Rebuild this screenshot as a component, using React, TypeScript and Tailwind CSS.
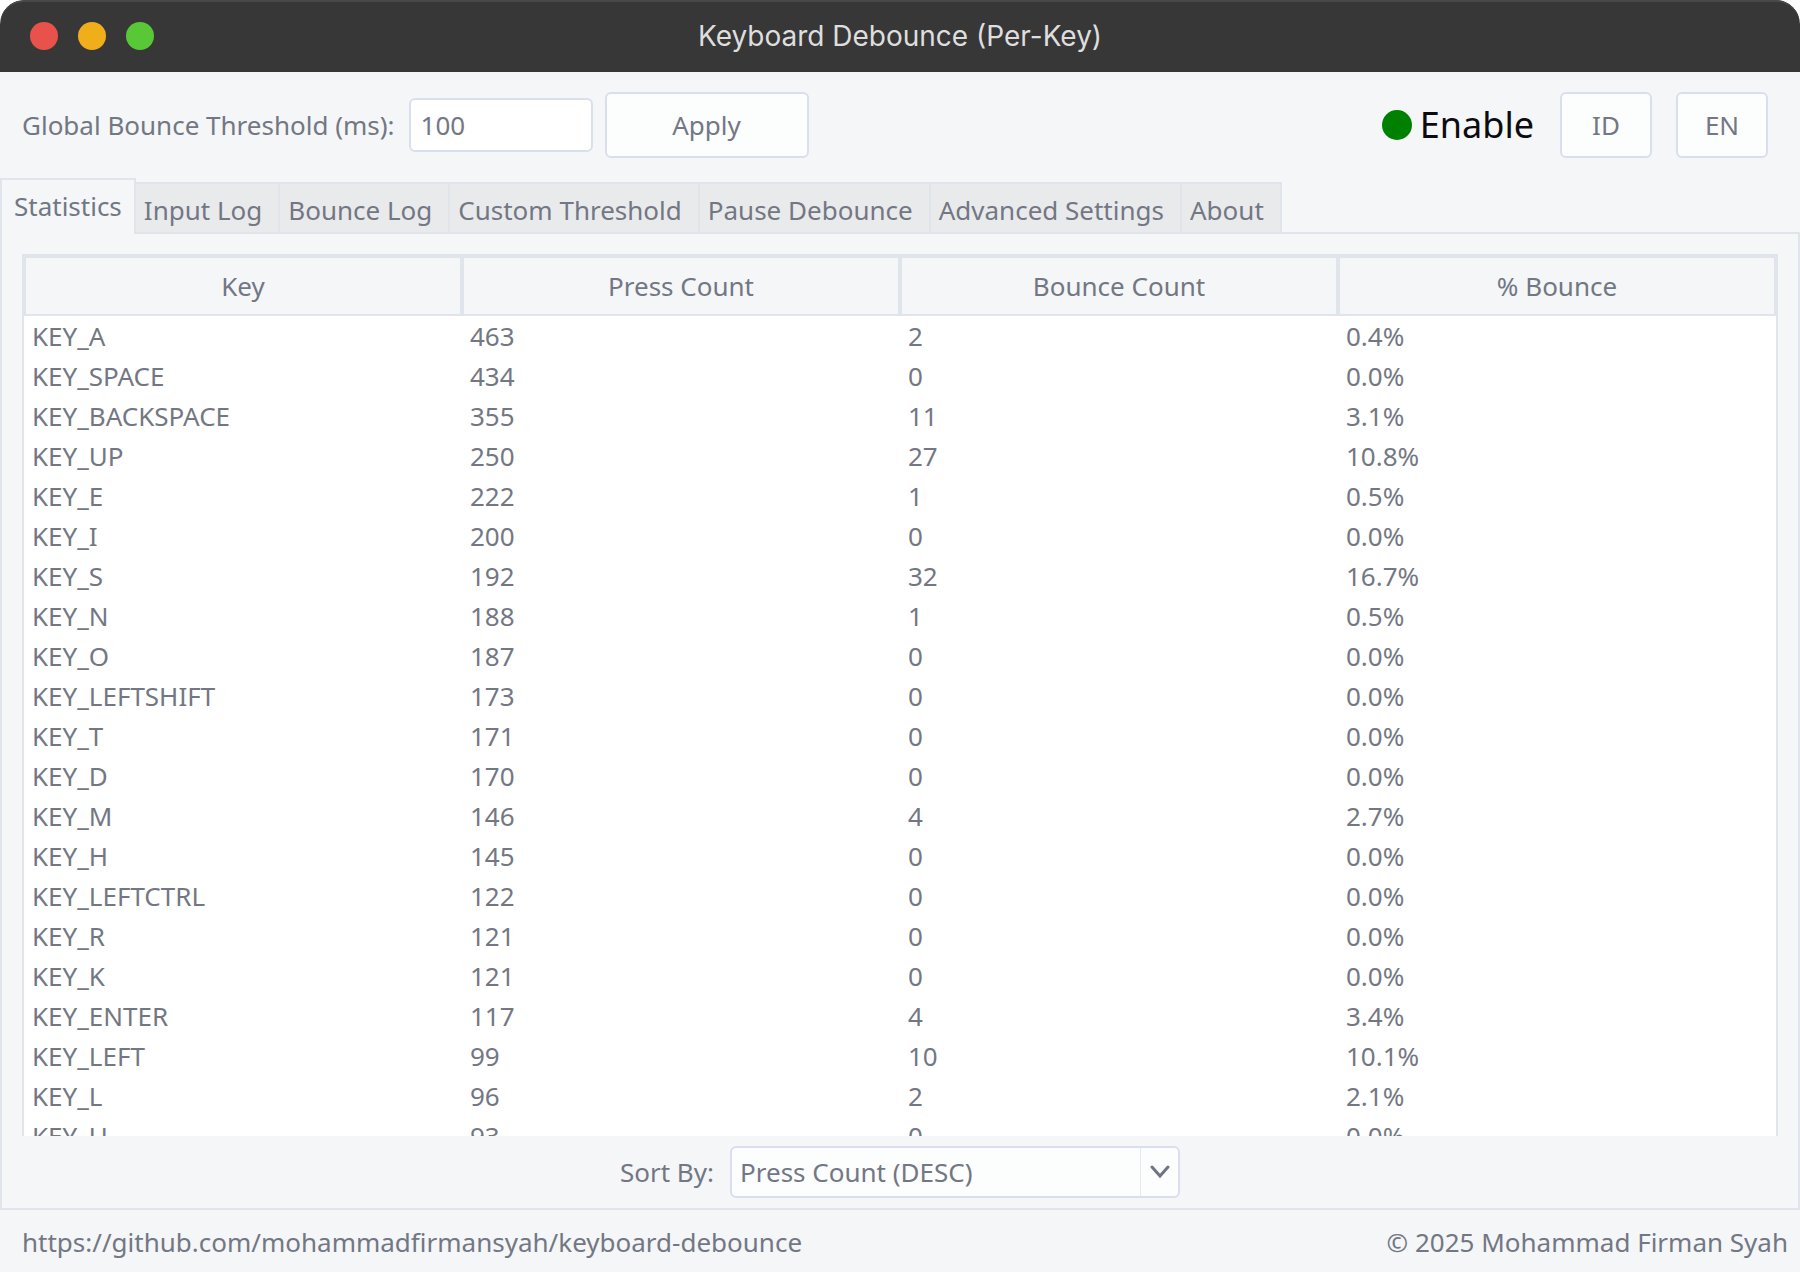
import { useState } from "react";

type KeyStat = { key: string; presses: number; bounces: number; rate: string };

const stats: KeyStat[] = [
  { key: "KEY_A", presses: 463, bounces: 2, rate: "0.4%" },
  { key: "KEY_SPACE", presses: 434, bounces: 0, rate: "0.0%" },
  { key: "KEY_BACKSPACE", presses: 355, bounces: 11, rate: "3.1%" },
  { key: "KEY_UP", presses: 250, bounces: 27, rate: "10.8%" },
  { key: "KEY_E", presses: 222, bounces: 1, rate: "0.5%" },
  { key: "KEY_I", presses: 200, bounces: 0, rate: "0.0%" },
  { key: "KEY_S", presses: 192, bounces: 32, rate: "16.7%" },
  { key: "KEY_N", presses: 188, bounces: 1, rate: "0.5%" },
  { key: "KEY_O", presses: 187, bounces: 0, rate: "0.0%" },
  { key: "KEY_LEFTSHIFT", presses: 173, bounces: 0, rate: "0.0%" },
  { key: "KEY_T", presses: 171, bounces: 0, rate: "0.0%" },
  { key: "KEY_D", presses: 170, bounces: 0, rate: "0.0%" },
  { key: "KEY_M", presses: 146, bounces: 4, rate: "2.7%" },
  { key: "KEY_H", presses: 145, bounces: 0, rate: "0.0%" },
  { key: "KEY_LEFTCTRL", presses: 122, bounces: 0, rate: "0.0%" },
  { key: "KEY_R", presses: 121, bounces: 0, rate: "0.0%" },
  { key: "KEY_K", presses: 121, bounces: 0, rate: "0.0%" },
  { key: "KEY_ENTER", presses: 117, bounces: 4, rate: "3.4%" },
  { key: "KEY_LEFT", presses: 99, bounces: 10, rate: "10.1%" },
  { key: "KEY_L", presses: 96, bounces: 2, rate: "2.1%" },
  { key: "KEY_U", presses: 93, bounces: 0, rate: "0.0%" },
];

const tabs = [
  "Statistics",
  "Input Log",
  "Bounce Log",
  "Custom Threshold",
  "Pause Debounce",
  "Advanced Settings",
  "About",
];

const columns = ["Key", "Press Count", "Bounce Count", "% Bounce"];

const buttonClass =
  "h-[66px] rounded-md border-2 border-[#d9dfed] bg-[#fcfdfd] text-center";

function TitleBar() {
  return (
    <header className="grid h-[72px] shrink-0 grid-cols-[1fr_auto_1fr] items-center rounded-t-[24px] bg-[#373737] px-[30px] inset-shadow-[0_2px_0_#484848]">
      <div className="flex gap-5">
        <button type="button" aria-label="Close" className="size-7 rounded-full bg-[#e9524a]" />
        <button type="button" aria-label="Minimize" className="size-7 rounded-full bg-[#f1ae1b]" />
        <button type="button" aria-label="Maximize" className="size-7 rounded-full bg-[#59c837]" />
      </div>
      <h1 className="font-['Inter',sans-serif] text-[28px] leading-9 text-[#dedede]">
        Keyboard Debounce (Per-Key)
      </h1>
    </header>
  );
}

function Toolbar() {
  return (
    <div className="flex shrink-0 items-center px-[22px] pt-5 pb-5 pr-8">
      <label htmlFor="threshold" className="mr-[14px]">
        Global Bounce Threshold (ms):
      </label>
      <input
        id="threshold"
        type="text"
        defaultValue="100"
        className="mr-3 h-[54px] w-[184px] rounded-md border-2 border-[#d9dfed] bg-white px-[10px]"
      />
      <button type="button" className={`${buttonClass} w-[204px]`}>
        Apply
      </button>
      <div className="mr-[26px] ml-auto flex items-center gap-2 text-4xl text-[#0c0c10]">
        <span className="size-[30px] rounded-full bg-[#008000]" />
        Enable
      </div>
      <button type="button" className={`${buttonClass} mr-6 w-[92px]`}>
        ID
      </button>
      <button type="button" className={`${buttonClass} w-[92px]`}>
        EN
      </button>
    </div>
  );
}

export default function App() {
  const [active, setActive] = useState("Statistics");

  return (
    <div className="h-screen bg-white">
      <div className="flex h-full flex-col overflow-hidden rounded-t-[24px] bg-[#f4f6f8] font-['Noto_Sans',sans-serif] text-[26px] leading-9 text-[#737783]">
        <TitleBar />
        <Toolbar />

        <div role="tablist" className="flex shrink-0 items-end">
          {tabs.map((tab) => (
            <button
              key={tab}
              type="button"
              role="tab"
              aria-selected={tab === active}
              onClick={() => setActive(tab)}
              className={
                tab === active
                  ? "h-14 border-x-2 border-t-2 border-[#dfe5eb] px-3 pb-[2px]"
                  : "h-[52px] border-y-2 border-r-2 border-[#dfe5eb] bg-[#e9eaec] pt-1 pr-4 pl-2"
              }
            >
              {tab}
            </button>
          ))}
          <div className="h-[52px] flex-1 border-b-2 border-[#dfe5eb]" />
        </div>

        <main className="flex min-h-0 flex-1 flex-col border-x-2 border-b-2 border-[#dfe5eb] px-5 pt-5">
          <div className="min-h-0 flex-1 overflow-hidden border-x-2 border-t-2 border-[#dfe5eb] bg-white">
            <table className="w-full table-fixed border-separate border-spacing-0">
              <thead>
                <tr>
                  {columns.map((column) => (
                    <th
                      key={column}
                      scope="col"
                      className="h-[60px] border-2 border-[#dfe5eb] bg-[#f4f6f8] p-0 font-normal"
                    >
                      {column}
                    </th>
                  ))}
                </tr>
              </thead>
              <tbody>
                {stats.map((row) => (
                  <tr key={row.key} className="h-10">
                    <td className="py-0 pl-2">{row.key}</td>
                    <td className="py-0 pl-2">{row.presses}</td>
                    <td className="py-0 pl-2">{row.bounces}</td>
                    <td className="py-0 pl-2">{row.rate}</td>
                  </tr>
                ))}
              </tbody>
            </table>
          </div>

          <div className="flex shrink-0 items-center justify-center gap-4 py-[10px]">
            <label htmlFor="sort">Sort By:</label>
            <div className="relative">
              <select
                id="sort"
                className="h-[52px] w-[450px] appearance-none rounded-md border-2 border-[#d9dfed] bg-[#fcfdfd] pl-2"
              >
                <option>Press Count (DESC)</option>
                <option>Press Count (ASC)</option>
                <option>Bounce Count (DESC)</option>
                <option>Bounce Count (ASC)</option>
              </select>
              <span className="pointer-events-none absolute inset-y-[2px] right-[2px] flex w-[38px] items-center justify-center border-l border-[#e6e9f0]">
                <svg viewBox="0 0 20 14" className="h-[14px] w-5" fill="none" stroke="#6f7480" strokeWidth="3">
                  <path d="M2 2l8 9 8-9" strokeLinecap="round" />
                </svg>
              </span>
            </div>
          </div>
        </main>

        <footer className="flex h-[62px] shrink-0 items-center justify-between pt-[2px] pr-3 pl-[22px]">
          <a href="https://github.com/mohammadfirmansyah/keyboard-debounce">
            https://github.com/mohammadfirmansyah/keyboard-debounce
          </a>
          <span>© 2025 Mohammad Firman Syah</span>
        </footer>
      </div>
    </div>
  );
}
